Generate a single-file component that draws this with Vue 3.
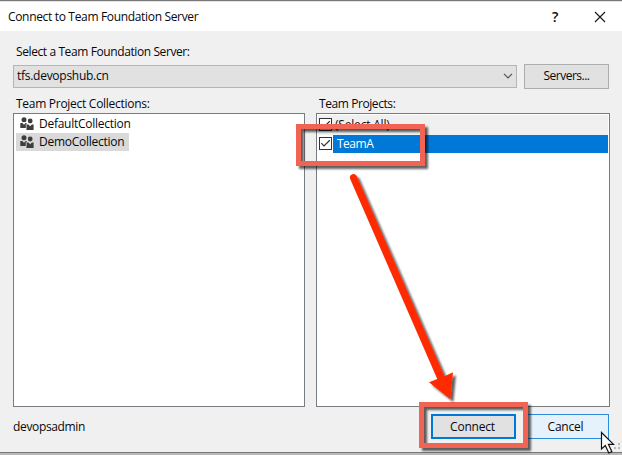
<script setup>
const collections = [
  { name: 'DefaultCollection', selected: false },
  { name: 'DemoCollection', selected: true }
]
const projects = [
  { name: '(Select All)', kind: 'all' },
  { name: 'TeamA', kind: 'selected' }
]
</script>

<template>
  <div class="dialog">
    <header class="titlebar">
      <h1 class="title">Connect to Team Foundation Server</h1>
      <span class="help">?</span>
      <svg class="close" width="12" height="12" viewBox="0 0 12 12">
        <path d="M1 1L11 11M11 1L1 11" fill="none" stroke="#1a1a1a" stroke-width="1.2" />
      </svg>
    </header>

    <main class="body">
      <label class="label server-label">Select a Team Foundation Server:</label>
      <div class="server-row">
        <div class="combo">
          <span class="server-name">tfs.devopshub.cn</span>
          <svg width="10" height="6" viewBox="0 0 10 6">
            <path d="M1 .8L5 4.8L9 .8" fill="none" stroke="#555" stroke-width="1.2" />
          </svg>
        </div>
        <button class="button servers"><span>Servers...</span></button>
      </div>

      <div class="columns">
        <section class="column">
          <label class="label collections-label">Team Project Collections:</label>
          <div class="list collections">
            <div v-for="c in collections" :key="c.name" class="collection" :class="{ picked: c.selected }">
              <svg class="people" width="14" height="14" viewBox="0 0 14 14" fill="#3d3d3d">
                <circle cx="4" cy="2.8" r="2.5" />
                <circle cx="10.2" cy="4" r="2.4" />
                <path d="M.3 6H2.4L4 7.8L5.6 6H6.6V11H.3z" />
                <path d="M6.4 7.4H8.5L10.2 9.2L11.8 7.4H13.6V13H6.4z" />
                <path d="M6.2 7.2V11.4" stroke="#fff" stroke-width=".6" />
              </svg>
              <span class="collection-name">{{ c.name }}</span>
            </div>
          </div>
        </section>
        <section class="column">
          <label class="label projects-label">Team Projects:</label>
          <div class="list">
            <div v-for="p in projects" :key="p.name" class="project" :class="p.kind">
              <svg class="check" width="13" height="13" viewBox="0 0 13 13">
                <rect x=".5" y=".5" width="12" height="12" fill="#fff" stroke="#333" />
                <path d="M2.3 6.2L5 9L10.8 3.3" fill="none" stroke="#333" stroke-width="1.2" />
              </svg>
              <span class="project-name">{{ p.name }}</span>
            </div>
          </div>
        </section>
      </div>

      <footer class="footer">
        <span class="user">devopsadmin</span>
        <button class="button connect"><span>Connect</span></button>
        <button class="button cancel"><span>Cancel</span></button>
      </footer>
    </main>

    <svg class="annotations" width="622" height="455" viewBox="0 0 622 455">
      <defs>
        <filter id="shadow" x="-20%" y="-20%" width="150%" height="150%">
          <feDropShadow dx="3" dy="3" stdDeviation="1.1" flood-color="#000" flood-opacity=".62" />
        </filter>
      </defs>
      <g fill="#b9b9b9">
        <path d="M618 443h2v2h-2zM614 447h2v2h-2zM618 447h2v2h-2zM610 449h2v2h-2z" />
      </g>
      <g filter="url(#shadow)" fill="none" stroke="#f16353" stroke-width="5">
        <rect x="298.5" y="126.5" width="124" height="37" />
        <rect x="421.5" y="404.5" width="104" height="41" />
      </g>
      <g filter="url(#shadow)" fill="#ff2a00">
        <path d="M350 178.5A3.6 3.6 0 0 1 356.6 175.8L444.5 376.2L453 372.3L450.3 399.3L429 382.3L437.3 379z" />
      </g>
      <path class="cursor" d="M601.5 432.5V449L605.3 445.5L608.8 453L611.8 451.6L608.4 444.3H613.5z" fill="#fff" stroke="#111" stroke-width="1.2" />
    </svg>
  </div>
</template>

<style>
body { margin: 0; overflow: hidden; }
</style>

<style scoped>
.dialog {
  position: relative;
  box-sizing: border-box;
  width: 622px;
  height: 455px;
  display: flex;
  flex-direction: column;
  border-top: 1px solid #777;
  border-bottom: 2px solid #b8b8b8;
  background: #f0f0f0;
  color: #08080c;
  font: 12px/18px "Open Sans", "Noto Sans", sans-serif;
}
.titlebar {
  height: 30px;
  flex: none;
  box-sizing: border-box;
  display: flex;
  align-items: center;
  padding: 0 16px 0 8px;
  border-top: 1px solid #e3e3e3;
  background: #fff;
}
.title { margin: 0; flex: 1; font: inherit; letter-spacing: -.33px; }
.help { width: 8px; margin-right: 34px; font-size: 14px; font-weight: 600; }
.body {
  flex: 1;
  display: flex;
  flex-direction: column;
  padding: 12px 12px 0 13px;
  border-bottom: 1px solid #777;
}
.label { display: block; height: 18px; margin-left: 3px; white-space: nowrap; }
.server-label { letter-spacing: -.4px; }
.collections-label { letter-spacing: -.28px; }
.projects-label { letter-spacing: -.42px; }
.server-row { display: flex; align-items: center; gap: 7px; height: 26px; margin-top: 2px; }
.combo {
  box-sizing: border-box;
  width: 504px;
  height: 23px;
  display: flex;
  align-items: center;
  justify-content: space-between;
  padding: 0 3px;
  border: 1px solid #b5b5b5;
  background: #e1e1e1;
}
.server-name { letter-spacing: -.27px; }
.button {
  box-sizing: border-box;
  height: 25px;
  padding: 0;
  border: 1px solid #adadad;
  background: #e1e1e1;
  color: inherit;
  font: inherit;
}
.servers { width: 85px; letter-spacing: -.5px; }
.columns { display: flex; gap: 11px; margin-top: 6px; }
.column { width: 292px; }
.column + .column { width: 294px; }
.list {
  box-sizing: border-box;
  height: 294px;
  padding: 1px;
  border: 1px solid #777b82;
  background: #fff;
}
.collections { padding-left: 2px; }
.collection {
  box-sizing: border-box;
  width: 113px;
  height: 18px;
  display: flex;
  align-items: center;
  gap: 5px;
  padding-left: 4px;
  white-space: nowrap;
}
.people { flex: none; }
.collection-name { letter-spacing: -.26px; }
.picked { background: #d9d9d9; }
.project { height: 20px; display: flex; align-items: flex-start; }
.project.all { background: #f0f0f0; }
.project.selected { height: 18px; }
.check { flex: none; margin: 2px 0 0 1px; }
.all .check { margin-top: 3px; }
.project-name { flex: 1; height: 18px; margin-left: 1px; padding-left: 4px; }
.all .project-name { margin-top: 1px; padding-left: 2px; letter-spacing: -.2px; }
.selected .project-name { background: #0078d7; color: #fff; letter-spacing: -.5px; line-height: 17px; }
.footer { display: flex; align-items: center; height: 25px; margin-top: 7px; padding-right: 1px; }
.user { flex: 1; letter-spacing: -.35px; }
.connect { width: 85px; margin-right: 8px; padding-right: 2px; border: 2px solid #0078d7; letter-spacing: -.2px; }
.cancel { width: 85px; padding-right: 2px; border-color: #2b8bde; background: #e5f1fb; letter-spacing: -.2px; }
.annotations { position: absolute; left: 0; top: -1px; pointer-events: none; }
</style>
